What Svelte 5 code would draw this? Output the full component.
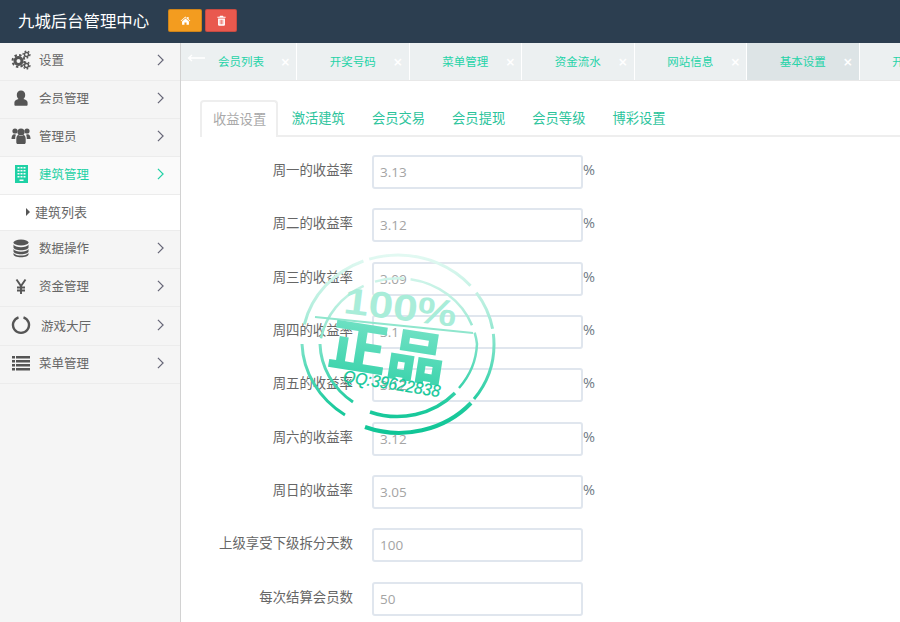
<script>
  const menu = [
    { name: '设置', icon: 'cogs' },
    { name: '会员管理', icon: 'user' },
    { name: '管理员', icon: 'users' },
    { name: '建筑管理', icon: 'building', active: true, sub: ['建筑列表'] },
    { name: '数据操作', icon: 'database' },
    { name: '资金管理', icon: 'yen' },
    { name: '游戏大厅', icon: 'notch', wide: true },
    { name: '菜单管理', icon: 'list' }
  ];
  const tabs = ['会员列表', '开奖号码', '菜单管理', '资金流水', '网站信息', '基本设置', '开奖号码'];
  const innerTabs = ['收益设置', '激活建筑', '会员交易', '会员提现', '会员等级', '博彩设置'];
  const fields = [
    { label: '周一的收益率', value: '3.13', pct: true },
    { label: '周二的收益率', value: '3.12', pct: true },
    { label: '周三的收益率', value: '3.09', pct: true },
    { label: '周四的收益率', value: '3.1', pct: true },
    { label: '周五的收益率', value: '3.12', pct: true },
    { label: '周六的收益率', value: '3.12', pct: true },
    { label: '周日的收益率', value: '3.05', pct: true },
    { label: '上级享受下级拆分天数', value: '100' },
    { label: '每次结算会员数', value: '50' }
  ];
</script>

<div class="page">
  <header class="top">
    <span class="brand">九城后台管理中心</span>
    <button class="btn orange" aria-label="首页">
      <svg viewBox="0 0 16 16" width="11" height="11"><path d="M8 2 1 8.200l.8.9L8 3.700l6.200 5.400.8-.9-2.500-2.200V3h-2v2.200zM3 9.500V14h3.500v-3.200h3V14H13V9.500L8 5.200z" fill="#fff"/></svg>
    </button>
    <button class="btn red" aria-label="删除">
      <svg viewBox="0 0 16 16" width="11" height="11"><path d="M6 1h4l1 1.500h3V4H2V2.500h3zM3 5h10v9.500l-1 1H4l-1-1zm2.500 2v6.500h1V7zm2 0v6.500h1V7zm2 0v6.500h1V7z" fill="#fff" fill-rule="evenodd"/></svg>
    </button>
  </header>

  <div class="body">
    <aside class="side">
      {#each menu as m}
        <div class="item" class:active={m.active} class:tall={m.wide}>
          <span class="ic">
            {#if m.icon === 'cogs'}
              <svg viewBox="0 0 20 20" width="20" height="20"><g fill="none" stroke="currentColor"><circle cx="7.500" cy="11" r="3.500" stroke-width="3"/><circle cx="7.500" cy="11" r="6" stroke-width="2" stroke-dasharray="2.400 2.300"/><circle cx="15.500" cy="4.500" r="2" stroke-width="1.400"/><circle cx="15.500" cy="4.500" r="3.400" stroke-width="1.300" stroke-dasharray="1.700 1.700"/><circle cx="15.500" cy="15.500" r="2" stroke-width="1.400"/><circle cx="15.500" cy="15.500" r="3.400" stroke-width="1.300" stroke-dasharray="1.700 1.700"/></g></svg>
            {:else if m.icon === 'user'}
              <svg viewBox="0 0 20 20" width="20" height="20"><path d="M10 2.500a4.200 4.200 0 0 1 4.200 4.500c0 2-1 3.500-1.800 4 2.200.4 4.200 1.500 4.200 3.500v2.200c0 .7-.5 1-1.200 1H4.600c-.7 0-1.200-.3-1.200-1v-2.200c0-2 2-3.100 4.200-3.500-.8-.5-1.800-2-1.800-4A4.200 4.200 0 0 1 10 2.500z" fill="currentColor"/></svg>
            {:else if m.icon === 'users'}
              <svg viewBox="0 0 20 20" width="20" height="20"><g fill="currentColor"><circle cx="4" cy="5" r="2.600"/><circle cx="16" cy="5" r="2.600"/><circle cx="10" cy="6" r="3.600"/><path d="M.5 13c0-3 1-4.800 3-4.800.6 0 1 .3 1.500.6-.6 1-.8 2.400-.8 4.200zM19.500 13c0-3-1-4.800-3-4.800-.6 0-1 .3-1.500.6.6 1 .8 2.400.8 4.200zM5.300 13c0-2.300.8-4 2.200-4 .7.500 1.500.9 2.500.9s1.800-.4 2.500-.9c1.400 0 2.200 1.700 2.200 4v3.500c0 .9-.6 1.500-1.500 1.500H6.800c-.9 0-1.500-.6-1.500-1.500z"/></g></svg>
            {:else if m.icon === 'building'}
              <svg viewBox="0 0 20 20" width="20" height="20"><path d="M4 1h13v18H4zm2.500 2v1.500h2V3zm3 0v1.500h2V3zm3 0v1.500h2V3zm-6 3v1.500h2V6zm3 0v1.500h2V6zm3 0v1.500h2V6zm-6 3v1.500h2V9zm3 0v1.500h2V9zm3 0v1.500h2V9zm-6 3v1.500h2V12zm3 0v1.500h2V12zm3 0v1.500h2V12zM8.500 15.500V17h4v-1.500z" fill="currentColor" fill-rule="evenodd"/></svg>
            {:else if m.icon === 'database'}
              <svg viewBox="0 0 20 20" width="20" height="20"><g fill="currentColor"><ellipse cx="10" cy="4.500" rx="7.500" ry="3"/><path d="M2.500 6.500c1 1.800 4 2.700 7.500 2.700s6.500-.9 7.500-2.700v3c0 1.600-3.400 2.800-7.500 2.800s-7.500-1.200-7.500-2.800zM2.500 11c1 1.800 4 2.700 7.500 2.700s6.500-.9 7.500-2.700v2.500c0 1.600-3.400 2.800-7.500 2.800s-7.500-1.200-7.500-2.800zM2.500 15c1 1.700 4 2.500 7.500 2.500s6.500-.8 7.500-2.500v1.500c0 1.600-3.400 2.700-7.500 2.700s-7.500-1.100-7.500-2.700z"/></g></svg>
            {:else if m.icon === 'yen'}
              <svg viewBox="0 0 20 20" width="20" height="20"><path d="M5.500 3.500 10 10l4.500-6.500M10 10v8M6 11.500h8M6 14.500h8" fill="none" stroke="currentColor" stroke-width="1.900"/></svg>
            {:else if m.icon === 'notch'}
              <svg viewBox="0 0 20 20" width="20" height="20"><path d="M7.500 2.300a8 8 0 1 0 5 0" fill="none" stroke="currentColor" stroke-width="2.400"/></svg>
            {:else}
              <svg viewBox="0 0 20 20" width="20" height="20"><path d="M1 3h3v2.500H1zm4 0h14v2.500H5zM1 7h3v2.500H1zm4 0h14v2.500H5zm-4 4h3v2.500H1zm4 0h14v2.500H5zm-4 4h3v2.500H1zm4 0h14v2.500H5z" fill="currentColor"/></svg>
            {/if}
          </span>
          <span class="name" class:wide={m.wide}>{m.name}</span>
          <svg class="chev" viewBox="0 0 8 14" width="7" height="12"><path d="m1 1 6 6-6 6" fill="none" stroke="currentColor" stroke-width="1.400"/></svg>
        </div>
        {#if m.sub}
          {#each m.sub as s}
            <div class="subitem"><i class="caret"></i>{s}</div>
          {/each}
        {/if}
      {/each}
    </aside>

    <main class="main">
      <nav class="tabs">
        <svg class="back" viewBox="0 0 18 8" width="18" height="8"><path d="M18 4H1.500M5 1 1.500 4 5 7" fill="none" stroke="#fff" stroke-width="1.300"/></svg>
        {#each tabs as t, i}
          <div class="tab" class:first={i === 0} class:cur={t === '基本设置'}>
            <span class="tab-text">{t}</span>
            <span class="x">×</span>
          </div>
        {/each}
      </nav>

      <div class="content">
        <ul class="inner">
          {#each innerTabs as t, i}
            <li class:on={i === 0}>{t}</li>
          {/each}
        </ul>
        <form class="form">
          {#each fields as f}
            <div class="row">
              <span class="label">{f.label}</span>
              <input class="field" value={f.value} />
              {#if f.pct}<span class="pct">%</span>{/if}
            </div>
          {/each}
        </form>
      </div>
    </main>
  </div>

  <svg class="stamp" viewBox="295 250 210 195" width="210" height="195">
    <defs>
      <linearGradient id="fade" gradientUnits="userSpaceOnUse" x1="0" y1="255" x2="0" y2="435">
        <stop offset="0" stop-color="#e2f9f2"/>
        <stop offset="0.3" stop-color="#b4eedd"/>
        <stop offset="0.6" stop-color="#5fdcbc"/>
        <stop offset="0.85" stop-color="#1cca9d"/>
        <stop offset="1" stop-color="#0fc596"/>
      </linearGradient>
      <linearGradient id="fade2" x1="0" y1="0" x2="0" y2="1">
        <stop offset="0" stop-color="#7fe5cb"/>
        <stop offset="1" stop-color="#35d2a9"/>
      </linearGradient>
    </defs>
    <g fill="none" stroke="url(#fade)">
      <!-- outer ring -->
      <path d="M302 344A96 89 0 0 0 345 415" stroke-width="3"/>
      <path d="M365 427A96 89 0 0 0 471 403" stroke-width="4"/>
      <path d="M474 399A96 89 0 0 0 494 344A96 89 0 0 0 302 344" stroke-width="3" stroke-dasharray="70 5 40 9 110 6 90"/>
      <!-- inner ring -->
      <path d="M320 344A79 74 0 0 0 353 402" stroke-width="3"/>
      <path d="M370 412A79 74 0 0 0 455 393" stroke-width="3.500"/>
      <path d="M459 388A79 74 0 0 0 477 344A79 74 0 0 0 320 344" stroke-width="2.500" stroke-dasharray="60 8 80 6 30 12 70"/>
    </g>
    <path d="M315 317 473 333" stroke="#8fe6cd" stroke-width="2"/>
    <text class="s100" x="396" y="320" text-anchor="middle" textLength="113" lengthAdjust="spacingAndGlyphs" transform="rotate(7 398 344)">100%</text>
    <g transform="rotate(9 398 344)">
      <text class="szp" x="389" y="374" text-anchor="middle" textLength="118" lengthAdjust="spacingAndGlyphs">正品</text>
      <text class="sqq" x="398" y="390" text-anchor="middle" textLength="98" lengthAdjust="spacingAndGlyphs">QQ:39622838</text>
    </g>
  </svg>
</div>

<style>
  :global(body) {
    margin: 0;
    background: #fff;
  }
  .page {
    position: relative;
    width: 900px;
    height: 622px;
    overflow: hidden;
    display: flex;
    flex-direction: column;
    font-family: "Open Sans", "Noto Sans CJK SC", sans-serif;
    font-size: 13.400px;
  }
  .top {
    height: 43px;
    flex: none;
    background: #2c3e50;
    display: flex;
    align-items: center;
    padding-left: 18px;
    box-sizing: border-box;
  }
  .brand {
    color: #fff;
    font-size: 16.400px;
    width: 150px;
    padding-bottom: 4px;
  }
  .btn {
    height: 23px;
    border: 1px solid rgba(0, 0, 0, 0.15);
    border-radius: 2px;
    padding: 0;
    margin-bottom: 2px;
    display: flex;
    align-items: center;
    justify-content: center;
  }
  .orange {
    background: #f39c1f;
    width: 34px;
    margin-right: 3px;
  }
  .red {
    background: #e9594e;
    width: 32px;
  }
  .body {
    flex: 1;
    display: flex;
    min-height: 0;
  }
  .side {
    width: 181px;
    flex: none;
    box-sizing: border-box;
    background: #f5f5f5;
    border-right: 1px solid #d2d2d2;
  }
  .item {
    height: 38px;
    box-sizing: border-box;
    border-bottom: 1.500px solid #ececec;
    padding-bottom: 4px;
    display: flex;
    align-items: center;
    color: #555;
  }
  .item.tall {
    height: 39px;
    padding-bottom: 2px;
  }
  .item.active {
    color: #1fd1a5;
    background: #fafafa;
  }
  .ic {
    width: 39px;
    padding-left: 11px;
    box-sizing: border-box;
    display: flex;
    flex: none;
  }
  .name {
    flex: 1;
    color: #666;
    font-size: 12.500px;
  }
  .name.wide {
    padding-left: 2px;
  }
  .active .name {
    color: #1fd1a5;
  }
  .chev {
    margin-right: 16px;
    color: #667;
  }
  .active .chev {
    color: #1fd1a5;
  }
  .subitem {
    height: 36px;
    background: #fff;
    border-bottom: 1.500px solid #ececec;
    box-sizing: border-box;
    padding-bottom: 2px;
    display: flex;
    align-items: center;
    padding-left: 26px;
    color: #666;
    font-size: 13px;
  }
  .caret {
    width: 0;
    height: 0;
    border-left: 4px solid #555;
    border-top: 4px solid transparent;
    border-bottom: 4px solid transparent;
    margin-right: 5px;
  }
  .main {
    flex: 1;
    min-width: 0;
    display: flex;
    flex-direction: column;
  }
  .tabs {
    position: relative;
    height: 37px;
    flex: none;
    display: flex;
    background: #ecf0f1;
    border-bottom: 1px solid #e8e8e8;
    overflow: hidden;
  }
  .back {
    position: absolute;
    left: 6px;
    top: 11px;
  }
  .tab {
    width: 112.500px;
    flex: none;
    box-sizing: border-box;
    border-right: 1.500px solid #fff;
    padding-bottom: 2px;
    display: flex;
    align-items: center;
    justify-content: center;
    position: relative;
    color: #25d3a8;
    font-size: 11.500px;
  }
  .tab.first {
    width: 116px;
  }
  .tab.first .tab-text {
    margin-left: 5px;
  }
  .tab.cur {
    background: #dde4e6;
  }
  .x {
    position: absolute;
    right: 6px;
    top: 10px;
    color: #fff;
    font-size: 16px;
    line-height: 18px;
    font-weight: 600;
  }
  .content {
    flex: 1;
    padding: 19px 0 0 19px;
    min-height: 0;
  }
  .inner {
    display: flex;
    list-style: none;
    margin: 0;
    padding: 0;
    height: 35px;
    border-bottom: 2px solid #eee;
    box-sizing: content-box;
    font-size: 13.300px;
  }
  .inner li {
    padding: 0 13.500px;
    line-height: 36px;
    color: #2cc49c;
  }
  .inner li.on {
    color: #a9a9a9;
    background: #fff;
    border: 2px solid #eee;
    border-bottom: 0;
    border-radius: 4px 4px 0 0;
    height: 37px;
    box-sizing: border-box;
    padding: 0 10px 0 11px;
    line-height: 34px;
  }
  .form {
    padding-top: 18px;
  }
  .row {
    display: flex;
    align-items: center;
    height: 34px;
    margin-bottom: 19.330px;
  }
  .label {
    width: 153px;
    text-align: right;
    margin-right: 19px;
    margin-bottom: 6px;
    color: #666;
    flex: none;
  }
  .field {
    width: 211px;
    height: 34px;
    box-sizing: border-box;
    border: 2px solid #e0e6ee;
    border-radius: 3px;
    padding: 0 6px;
    font: inherit;
    font-size: 13.500px;
    color: #a4a4a4;
    outline: none;
  }
  .pct {
    margin-left: 0;
    margin-bottom: 5px;
    color: #6f7a85;
    font-size: 14.500px;
  }
  .stamp {
    position: absolute;
    left: 295px;
    top: 250px;
    pointer-events: none;
  }
  .s100 {
    font-family: "Liberation Sans", sans-serif;
    font-weight: 700;
    font-size: 37px;
    fill: #a9edd9;
  }
  .szp {
    font-family: "Noto Sans CJK SC", sans-serif;
    font-weight: 900;
    font-size: 56px;
    fill: url(#fade2);
  }
  .sqq {
    font-family: "Liberation Sans", sans-serif;
    font-style: italic;
    font-size: 17px;
    fill: #14c89a;
    stroke: #14c89a;
    stroke-width: 0.300;
  }
</style>
